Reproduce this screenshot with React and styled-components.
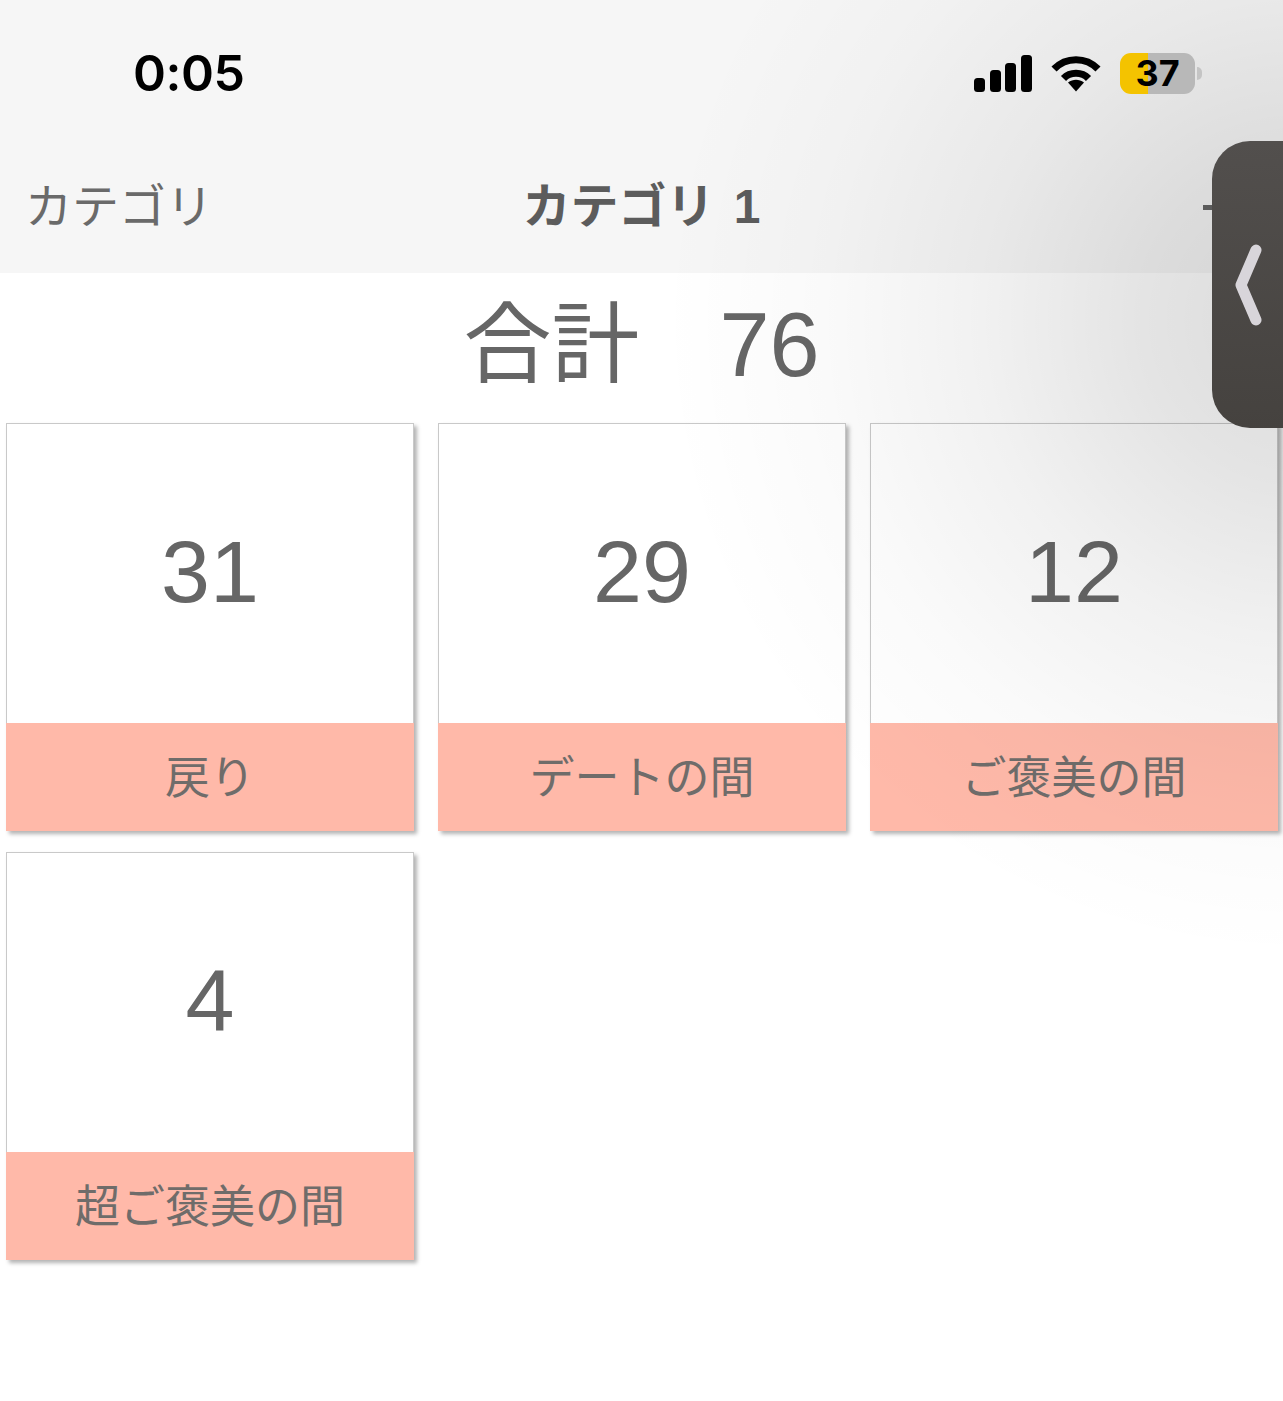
import React from 'react';
import styled, { createGlobalStyle } from 'styled-components';

const GlobalStyle = createGlobalStyle`
    html, body {
        margin: 0;
        padding: 0;
        background: #fff;
    }
    body {
        font-family: "Liberation Sans", "Noto Sans CJK JP", sans-serif;
        color: #666;
    }
`;

const Page = styled.div`
    position: relative;
    width: 1283px;
    height: 1401px;
    overflow: hidden;
    background: #fff;
`;

const Header = styled.header`
    background: #f6f6f6;
    height: 273px;
    box-sizing: border-box;
    padding-top: 46px;
`;

const StatusBar = styled.div`
    display: flex;
    align-items: center;
    justify-content: space-between;
    height: 54px;
    padding: 0 88px 0 133px;
`;

const Time = styled.div`
    font-family: Inter, "Liberation Sans", sans-serif;
    font-size: 50px;
    font-weight: 600;
    line-height: 54px;
    color: #000;
    letter-spacing: -0.5px;
`;

const StatusIcons = styled.div`
    position: relative;
    z-index: 1;
    display: flex;
    align-items: center;
    gap: 19px;
`;

const Battery = styled.div`
    position: relative;
    display: flex;
    align-items: center;
    justify-content: center;
    width: 75px;
    height: 41px;
    border-radius: 11px;
    background: linear-gradient(90deg, #f4c300 0 28px, #b8b8b8 28px);
    font-family: Inter, "Liberation Sans", sans-serif;
    font-size: 36px;
    font-weight: 700;
    color: #000;

    &::after {
        content: "";
        position: absolute;
        left: 77px;
        top: 14px;
        width: 5px;
        height: 13px;
        border-radius: 0 7px 7px 0;
        background: #c4c4c4;
    }
`;

const Nav = styled.nav`
    display: grid;
    grid-template-columns: 1fr auto 1fr;
    align-items: center;
    height: 60px;
    margin-top: 77px;
`;

const BackLabel = styled.div`
    margin-left: 25px;
    font-size: 47px;
    line-height: 60px;
    color: #6a6a6a;
`;

const NavTitle = styled.div`
    font-size: 48px;
    font-weight: 700;
    line-height: 60px;
    color: #5c5c5c;
    word-spacing: 6px;
`;

const AddButton = styled.div`
    justify-self: end;
    display: flex;
    margin-right: 36px;
`;

const Total = styled.div`
    display: flex;
    justify-content: center;
    align-items: center;
    gap: 80px;
    height: 144px;
    padding-bottom: 6px;
    font-size: 90px;
    line-height: 1;
    color: #666;
`;

const TotalLabel = styled.span`
    font-size: 88px;
`;

const Grid = styled.div`
    display: grid;
    grid-template-columns: repeat(3, 408px);
    column-gap: 24px;
    row-gap: 21px;
    padding-left: 6px;
`;

const Card = styled.div`
    display: flex;
    flex-direction: column;
    box-sizing: border-box;
    height: 408px;
    background: #fff;
    border: 1px solid #c9c9c9;
    border-bottom: 0;
    box-shadow: 3px 3px 4px rgba(0, 0, 0, 0.3);
`;

const Count = styled.div`
    flex: 1;
    display: flex;
    align-items: center;
    justify-content: center;
    font-size: 88px;
    line-height: 1;
    padding-bottom: 4px;
    color: #666;
`;

const CardLabel = styled.div`
    height: 108px;
    margin: 0 -1px;
    padding-bottom: 6px;
    box-sizing: border-box;
    display: flex;
    align-items: center;
    justify-content: center;
    background: #ffb9a9;
    font-size: 45px;
    font-weight: 400;
    color: #6f6c6a;
`;

const Shade = styled.div`
    position: absolute;
    inset: 0;
    pointer-events: none;
    background: radial-gradient(circle 640px at 1300px 320px, rgba(0, 0, 0, 0.14) 0%, rgba(0, 0, 0, 0.105) 25%, rgba(0, 0, 0, 0.055) 50%, rgba(0, 0, 0, 0.018) 75%, rgba(0, 0, 0, 0) 100%);
`;

const Handle = styled.div`
    position: absolute;
    top: 141px;
    right: 0;
    width: 71px;
    height: 287px;
    display: flex;
    align-items: center;
    border-radius: 38px 0 0 38px;
    background: linear-gradient(180deg, #524f4d 0%, #45423f 100%);
`;

const ChevronSlot = styled.div`
    display: flex;
    margin-left: 23px;
    margin-top: 3px;
`;

const categories = [
    { label: '戻り', count: 31 },
    { label: 'デートの間', count: 29 },
    { label: 'ご褒美の間', count: 12 },
    { label: '超ご褒美の間', count: 4 },
];

const SignalIcon = () => (
    <svg width="58" height="37" viewBox="0 0 58 37" fill="#000">
        <rect x="0" y="23" width="11" height="14" rx="3.5" />
        <rect x="16" y="15" width="11" height="22" rx="3.5" />
        <rect x="31" y="8" width="11" height="29" rx="3.5" />
        <rect x="47" y="0" width="11" height="37" rx="3.5" />
    </svg>
);

const WifiIcon = () => (
    <svg width="50" height="38" viewBox="0 0 50 38" fill="none" stroke="#000" strokeWidth="7">
        <path d="M3 15 C15 2.500 35 2.500 47 15" />
        <path d="M12.500 24.500 C19 17.500 31 17.500 37.500 24.500" />
        <path d="M17 28.500 L25 37.500 L33 28.500 C28 24.800 22 24.800 17 28.500 Z" fill="#000" stroke="none" />
    </svg>
);

const PlusIcon = () => (
    <svg width="44" height="44" viewBox="0 0 44 44" fill="#666">
        <rect x="0" y="20" width="44" height="5" />
        <rect x="20" y="0" width="5" height="44" />
    </svg>
);

const ChevronIcon = () => (
    <svg width="30" height="84" viewBox="0 0 30 84" fill="none" stroke="#d8d5da" strokeWidth="11" strokeLinecap="round" strokeLinejoin="round">
        <path d="M21 6 L6 41 L21 76" />
    </svg>
);

const App = () => {
    return (
        <Page>
            <GlobalStyle />
            <Header>
                <StatusBar>
                    <Time>0:05</Time>
                    <StatusIcons>
                        <SignalIcon />
                        <WifiIcon />
                        <Battery>37</Battery>
                    </StatusIcons>
                </StatusBar>
                <Nav>
                    <BackLabel>カテゴリ</BackLabel>
                    <NavTitle>カテゴリ 1</NavTitle>
                    <AddButton><PlusIcon /></AddButton>
                </Nav>
            </Header>
            <Total>
                <TotalLabel>合計</TotalLabel>
                <span>76</span>
            </Total>
            <Grid>
                {categories.map((item) => (
                    <Card key={item.label}>
                        <Count>{item.count}</Count>
                        <CardLabel>{item.label}</CardLabel>
                    </Card>
                ))}
            </Grid>
            <Shade />
            <Handle>
                <ChevronSlot><ChevronIcon /></ChevronSlot>
            </Handle>
        </Page>
    );
};

export default App;
